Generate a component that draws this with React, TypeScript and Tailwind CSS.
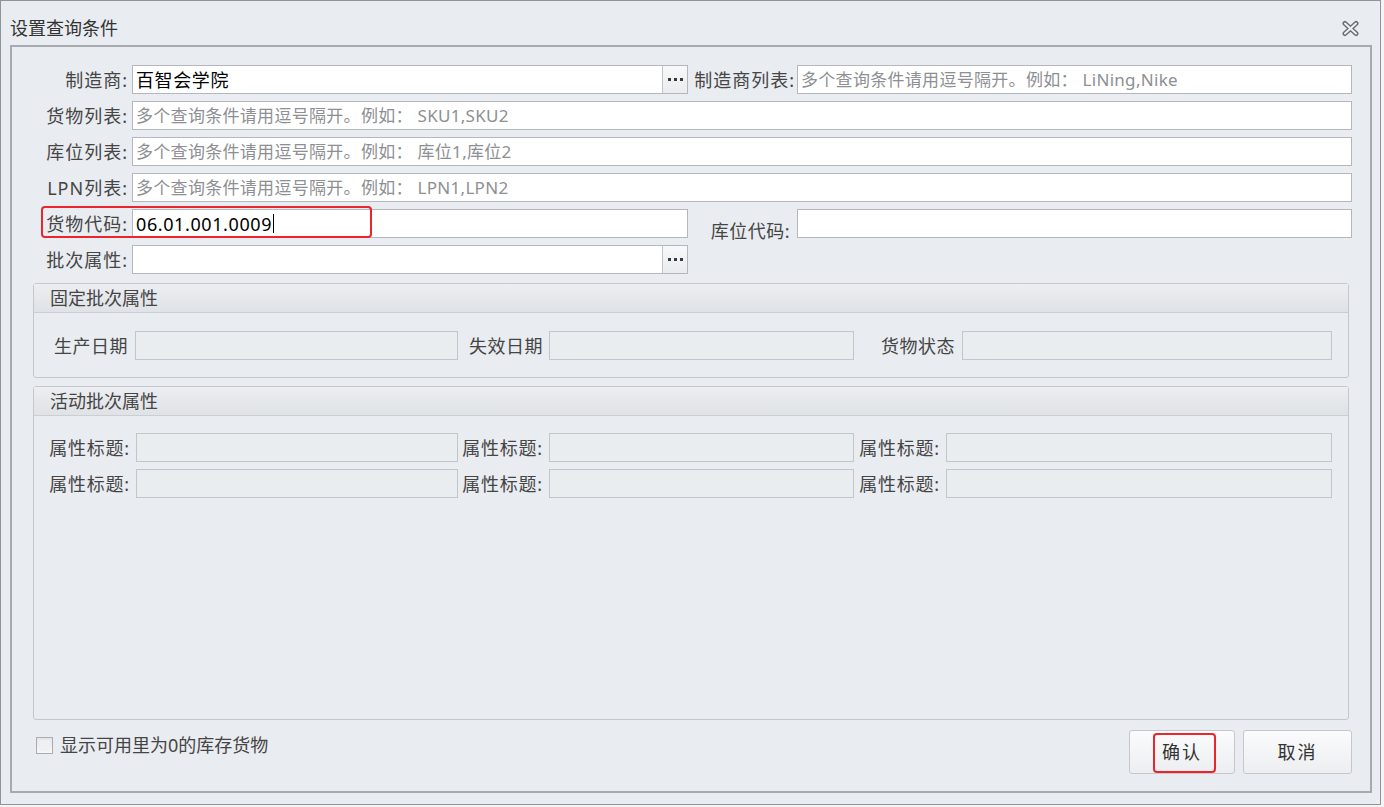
import React from "react";

const FONT = "font-['Noto_Sans','Noto_Sans_CJK_SC',sans-serif]";

function Dots() {
  return (
    <div className="w-[25px] h-full shrink-0 border-l border-[#c2c5ca] bg-gradient-to-b from-[#f8f9fa] to-[#e9ebee] flex items-center justify-center gap-[3px]">
      <span className="w-[3px] h-[3px] bg-[#3a3a3a]" />
      <span className="w-[3px] h-[3px] bg-[#3a3a3a]" />
      <span className="w-[3px] h-[3px] bg-[#3a3a3a]" />
    </div>
  );
}

function TextBox({
  width,
  value,
  placeholder,
  picker,
  caret,
}: {
  width?: string;
  value?: string;
  placeholder?: string;
  picker?: boolean;
  caret?: boolean;
}) {
  return (
    <div
      className={`${width ?? "flex-1"} h-[29px] shrink-0 border border-[#b4b7bd] bg-white flex items-stretch`}
    >
      <div className="flex-1 flex items-center pl-[3px] overflow-hidden whitespace-pre">
        {value ? (
          <span className="text-[18px] leading-none text-black tracking-[0.6px]">{value}</span>
        ) : (
          <span className="text-[17px] leading-none text-[#8d8f93] tracking-[0.3px]">{placeholder}</span>
        )}
        {caret && <span className="w-px h-[19px] bg-black ml-[1px]" />}
      </div>
      {picker && <Dots />}
    </div>
  );
}

function Label({ children, className = "" }: { children: React.ReactNode; className?: string }) {
  return (
    <div
      className={`shrink-0 text-right text-[18px] leading-none text-[#454545] whitespace-nowrap ${className}`}
    >
      {children}
    </div>
  );
}

function Dead({ width }: { width?: string }) {
  return <div className={`${width ?? "flex-1"} h-[29px] shrink-0 border border-[#c2c5ca] bg-[#eaedf0]`} />;
}

function GroupBox({
  title,
  height,
  children,
}: {
  title: string;
  height: string;
  children: React.ReactNode;
}) {
  return (
    <div className={`mx-[21px] ${height} border border-[#c4c7cc] rounded-[3px] flex flex-col`}>
      <div className="h-[29px] shrink-0 bg-gradient-to-b from-[#eceef1] to-[#dfe2e6] border-b border-[#cbced3] flex items-center pl-[16px]">
        <span className="text-[18px] leading-none text-[#454545]">{title}</span>
      </div>
      {children}
    </div>
  );
}

const hint = (ex: string) => `多个查询条件请用逗号隔开。例如： ${ex}`;

export default function App() {
  return (
    <div className={`w-[1384px] h-[807px] bg-[#f4f4f4] ${FONT}`}>
      <div className="w-[1381px] h-[805px] border border-[#8f949b] bg-[#e9ecf0] flex flex-col pl-[9px] pr-[8px] pb-[11px]">
        {/* Title bar */}
        <div className="h-[44px] shrink-0 flex items-center justify-between pt-[10px] pr-[12px]">
          <span className="text-[18px] leading-none text-[#333]">设置查询条件</span>
          <svg width="19" height="17" viewBox="0 0 19 17">
            <path d="M4 3.5 L15 13.5 M15 3.5 L4 13.5" stroke="#6a6e74" strokeWidth="5" strokeLinecap="round" fill="none" />
            <path d="M4 3.5 L15 13.5 M15 3.5 L4 13.5" stroke="#eef0f3" strokeWidth="2" strokeLinecap="round" fill="none" />
          </svg>
        </div>

        {/* Panel */}
        <div className="flex-1 border-2 border-[#a7abb1] flex flex-col">
          <div className="flex flex-col gap-[7px] pt-[18px] pr-[18px]">
            <div className="h-[29px] flex items-center">
              <Label className="w-[116px] tracking-[1px]">制造商:</Label>
              <div className="w-[4px]" />
              <TextBox width="w-[556px]" value="百智会学院" picker />
              <Label className="flex-1 pr-[2px] tracking-[1px]">制造商列表:</Label>
              <TextBox width="w-[555px]" placeholder={hint("LiNing,Nike")} />
            </div>
            <div className="h-[29px] flex items-center">
              <Label className="w-[116px] tracking-[1px]">货物列表:</Label>
              <div className="w-[4px]" />
              <TextBox placeholder={hint("SKU1,SKU2")} />
            </div>
            <div className="h-[29px] flex items-center">
              <Label className="w-[116px] tracking-[1px]">库位列表:</Label>
              <div className="w-[4px]" />
              <TextBox placeholder={hint("库位1,库位2")} />
            </div>
            <div className="h-[29px] flex items-center">
              <Label className="w-[116px] tracking-[1px]">LPN列表:</Label>
              <div className="w-[4px]" />
              <TextBox placeholder={hint("LPN1,LPN2")} />
            </div>
            <div className="h-[29px] flex items-center relative">
              <Label className="w-[116px] tracking-[1px]">货物代码:</Label>
              <div className="w-[4px]" />
              <TextBox width="w-[556px]" value="06.01.001.0009" caret />
              <Label className="flex-1 pr-[7px] pt-[14px] tracking-[0.5px]">库位代码:</Label>
              <TextBox width="w-[555px]" />
              <div className="absolute left-[29px] top-[-3px] w-[331px] h-[32px] border-2 border-[#e8262b] rounded-[4px] pointer-events-none" />
            </div>
            <div className="h-[29px] flex items-center">
              <Label className="w-[116px] tracking-[1px]">批次属性:</Label>
              <div className="w-[4px]" />
              <TextBox width="w-[556px]" picker />
            </div>
          </div>

          <div className="h-[9px] shrink-0" />
          <GroupBox title="固定批次属性" height="h-[95px]">
            <div className="pt-[18px] pr-[16px] flex items-center">
              <Label className="w-[97px] pr-[3px] tracking-[0.5px]">生产日期</Label>
              <div className="w-[4px]" />
              <Dead width="w-[323px]" />
              <Label className="w-[87px] pr-[2px] tracking-[0.5px]">失效日期</Label>
              <div className="w-[4px]" />
              <Dead width="w-[305px]" />
              <Label className="w-[104px] pr-[3px] tracking-[0.5px]">货物状态</Label>
              <div className="w-[4px]" />
              <Dead />
            </div>
          </GroupBox>

          <div className="h-[8px] shrink-0" />
          <GroupBox title="活动批次属性" height="h-[334px]">
            <div className="pt-[17px] pr-[16px] flex flex-col gap-[7px]">
              {[0, 1].map((r) => (
                <div key={r} className="h-[29px] flex items-center">
                  <Label className="w-[99px] pr-[3px] tracking-[0.8px]">属性标题:</Label>
                  <div className="w-[3px]" />
                  <Dead width="w-[322px]" />
                  <Label className="w-[88px] pr-[3px] tracking-[0.8px]">属性标题:</Label>
                  <div className="w-[3px]" />
                  <Dead width="w-[305px]" />
                  <Label className="w-[89px] pr-[3px] tracking-[0.8px]">属性标题:</Label>
                  <div className="w-[3px]" />
                  <Dead />
                </div>
              ))}
            </div>
          </GroupBox>

          {/* Footer */}
          <div className="flex items-start justify-between pl-[24px] pr-[18px] pt-[10px]">
            <div className="mt-[6px] flex items-center gap-[7px]">
              <div className="w-[17px] h-[17px] border border-[#a9acb1] bg-gradient-to-b from-[#e4e6e9] to-[#f6f7f8] p-[2px]">
                <div className="w-full h-full bg-[#eef0f2]" />
              </div>
              <span className="text-[18px] leading-none text-[#454545]">显示可用里为0的库存货物</span>
            </div>
            <div className="flex gap-[8px]">
              <button className="relative w-[106px] h-[44px] border border-[#c4c7cc] rounded-[3px] bg-gradient-to-b from-[#fbfbfc] to-[#eceef1] text-[18px] leading-none tracking-[2px] text-[#333]">
                确认
                <span className="absolute left-[23px] top-[2px] w-[63px] h-[40px] border-2 border-[#e8262b] rounded-[4px]" />
              </button>
              <button className="w-[109px] h-[44px] border border-[#c4c7cc] rounded-[3px] bg-gradient-to-b from-[#fbfbfc] to-[#eceef1] text-[18px] leading-none tracking-[2px] text-[#333]">
                取消
              </button>
            </div>
          </div>
        </div>
      </div>
    </div>
  );
}
